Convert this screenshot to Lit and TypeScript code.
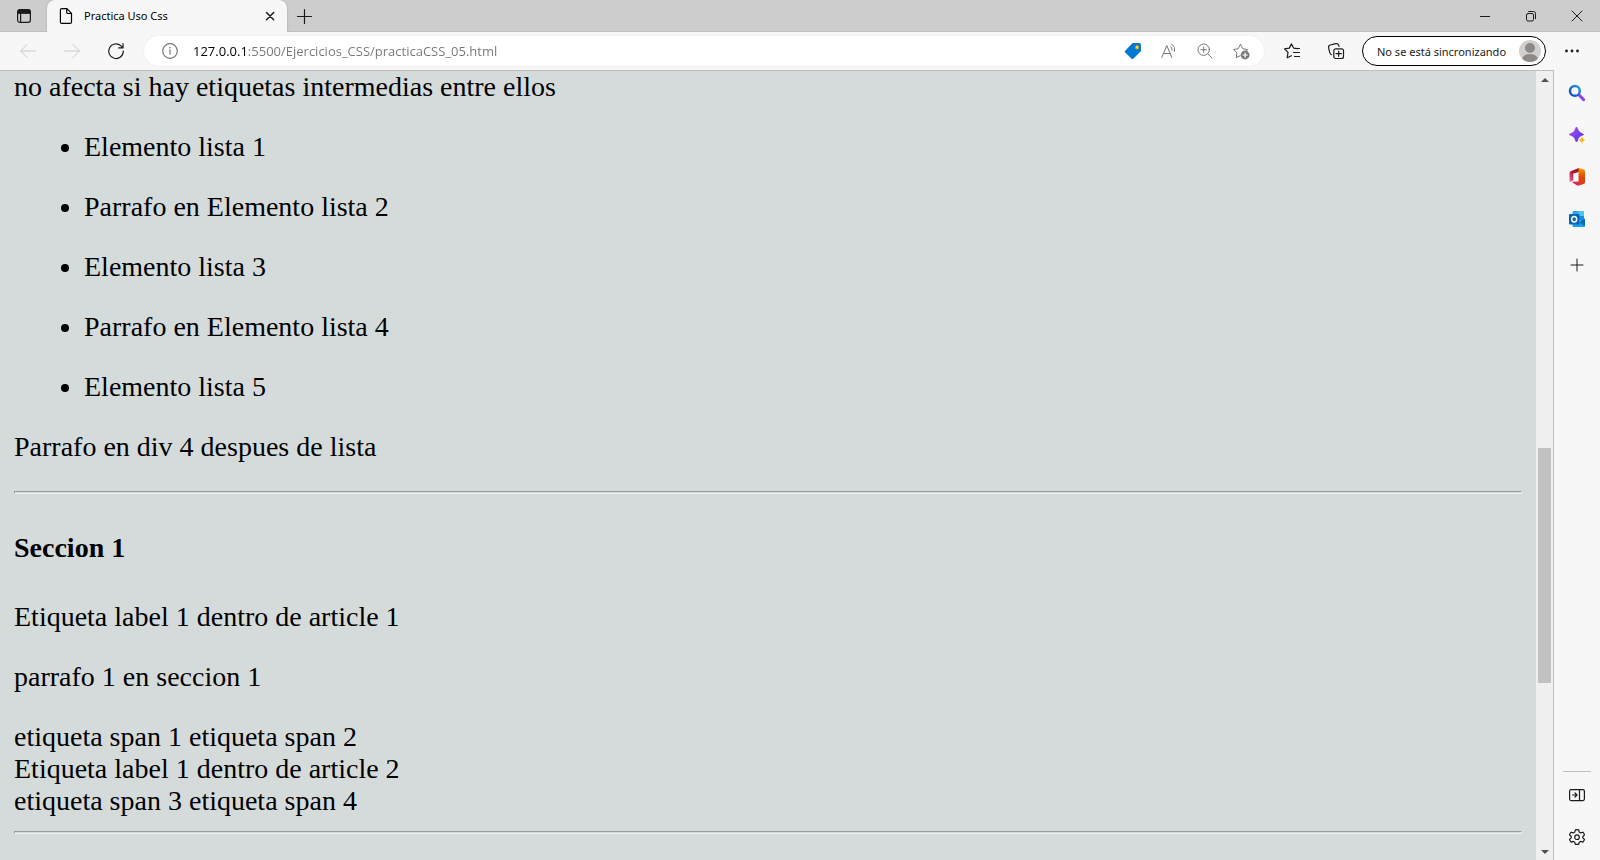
import { LitElement, html, css, svg } from "lit";
import { customElement } from "lit/decorators.js";

const svgIcon = (body: unknown, size = 16) =>
  html`<svg width=${size} height=${size} viewBox="0 0 ${size} ${size}" fill="none" stroke="currentColor" stroke-linecap="round" stroke-linejoin="round" aria-hidden="true">${body}</svg>`;

const icons = {
  tabs: svgIcon(svg`<rect x="1.6" y="1.6" width="12.8" height="12.8" rx="2.4" stroke-width="1.2"/><path d="M1.6 5V4a2.4 2.4 0 0 1 2.4-2.4h8A2.4 2.4 0 0 1 14.4 4v1z" fill="currentColor"/><path d="M4.6 5v9" stroke-width="1.2"/>`),
  page: svgIcon(svg`<path d="M3.9.6h5l4.6 4.7v8.6a1.5 1.5 0 0 1-1.5 1.5H3.9A1.5 1.5 0 0 1 2.4 13.9V2.1A1.5 1.5 0 0 1 3.9.6zM8.7.8v3.4a1.3 1.3 0 0 0 1.3 1.3h3.3" stroke-width="1.2"/>`),
  tabClose: svgIcon(svg`<path d="M4.5 4.5l7.2 7.2M11.7 4.5l-7.2 7.2" stroke-width="1.5"/>`),
  plus: svgIcon(svg`<path d="M8.500 1.500v14M1.500 8.500h14" stroke-width="1.2"/>`, 17),
  minimize: svgIcon(svg`<path d="M3 8.500h10" stroke-linecap="butt"/>`),
  restore: svgIcon(svg`<rect x="3.5" y="5.5" width="7" height="7.5" rx="1.5"/><path d="M5.6 3.5h4.9a2 2 0 0 1 2 2v5.2"/>`),
  close: svgIcon(svg`<path d="M3 3l10 10M13 3L3 13"/>`),
  back: svgIcon(svg`<path d="M15.5 8H.8M7 1.5L.6 8 7 14.5"/>`),
  forward: svgIcon(svg`<path d="M.5 8h14.700M9 1.5L15.4 8 9 14.5"/>`),
  reload: svgIcon(svg`<path d="M15.3 8.2A7.3 7.3 0 1 1 13 2.9l1.8 1.7M15 .7v4.2h-4.3" stroke-width="1.2"/>`),
  info: svgIcon(svg`<circle cx="8" cy="8" r="7.3" stroke-width="1.2"/><path d="M8 7.2v4" stroke-width="1.2"/><circle cx="8" cy="4.800" r=".8" fill="currentColor" stroke="none"/>`),
  tag: svgIcon(svg`<path d="M7.6 0h6.5A1.900 1.900 0 0 1 16 1.900v6L8.500 15.500a1.500 1.500 0 0 1-2.100 0L.4 9.800a1.500 1.500 0 0 1 0-2.300z" fill="#0078d4" stroke="none"/><rect x="10.5" y="2.700" width="3.2" height="3.2" rx="1" fill="#ffd65c" stroke="#c69a1d"/>`),
  read: svgIcon(svg`<path d="M.8 14.5L5.800 2.500l5 12M2.600 10.500h6.400M9.800 3.600q1.400 1.400 1.200 3.600M11 1.300q3.600 2.600 2.600 7"/>`),
  zoom: svgIcon(svg`<circle cx="6.7" cy="6.7" r="5.7"/><path d="M10.900 10.900l4 4M6.700 4v5.400M4 6.700h5.400"/>`),
  star: svgIcon(svg`<path d="M7.100 12.700l-3.900 2 .7-4.800L.600 6.500l4.600-.8L7.500 1.200l2.200 4.500 5 .8-1.500 1.700"/><circle cx="12.1" cy="12" r="4.400" fill="currentColor" stroke="none"/><path d="M12.100 9.800v4.400M9.900 12h4.400" stroke="#fff" stroke-width="1.200"/>`, 17),
  favorites: svgIcon(svg`<path d="M13.500 5.600l-3.900-.5L7.500.9 5.300 5.100.6 5.900 4 9.300l-.8 5.500 4.200-2.100M10.500 5.500h5M9.500 9.500h6M10.500 13.500h5" stroke-width="1.2"/>`),
  collections: svgIcon(svg`<rect x="5.800" y="5.800" width="9.700" height="9.700" rx="2" stroke-width="1.2"/><path d="M10.650 8v5.300M8 10.650h5.300" stroke-width="1.2"/><path d="M3.500 11.700C2.300 11.300 2 10.500 1.700 9.400L.6 4.800C.3 3.300.9 2.400 2.200 2L7.800.6c1.500-.3 2.400.2 2.900 1.500l.3 1.300" stroke-width="1.2"/>`),
  avatar: svgIcon(svg`<defs><clipPath id="face"><circle cx="11" cy="11" r="11"/></clipPath></defs><circle cx="11" cy="11" r="11" fill="#d2d0ce" stroke="none"/><g clip-path="url(#face)" fill="#8f8985" stroke="none"><circle cx="11" cy="8" r="5"/><ellipse cx="11" cy="19" rx="7.8" ry="5"/></g>`, 22),
  dots: svgIcon(svg`<g fill="currentColor" stroke="none"><circle cx="2.5" cy="8" r="1.4"/><circle cx="8" cy="8" r="1.4"/><circle cx="13.5" cy="8" r="1.4"/></g>`),
  search: svgIcon(svg`<defs><linearGradient id="lens" x1="1" y1="0" x2="0" y2="1"><stop stop-color="#2f9be8"/><stop offset="1" stop-color="#0c46bd"/></linearGradient></defs><path d="M10.300 10.300l4.300 4.300" stroke="#8a45ee" stroke-width="3"/><circle cx="5.900" cy="5.900" r="4.900" stroke="url(#lens)" stroke-width="2.500"/>`),
  discover: svgIcon(svg`<defs><linearGradient id="spark" x1="0" y1="0" x2="1" y2="1"><stop stop-color="#b04df0"/><stop offset="1" stop-color="#4b35df"/></linearGradient></defs><path d="M7.500 0q.9 0 1.200 1.300 1 4 5 5.100 1.300.4 1.300 1.100t-1.300 1.100q-4 1.100-5 5.100Q8.400 15 7.500 15t-1.200-1.300q-1-4-5-5.100Q0 8.200 0 7.500t1.300-1.100q4-1.100 5-5.100Q6.600 0 7.500 0z" fill="url(#spark)" stroke="none"/><path d="M13 9.200q.7 3.100 3.900 3.800-3.200.7-3.900 3.900-.7-3.200-3.900-3.900 3.200-.7 3.900-3.800z" fill="#ffb50b" stroke="#f7f7f7" stroke-width=".4"/>`),
  office: svgIcon(svg`<defs><linearGradient id="officeLeft" x1="0" y1="1" x2="1" y2="0"><stop stop-color="#f0709a"/><stop offset=".5" stop-color="#b5173f"/><stop offset="1" stop-color="#8b1620"/></linearGradient><linearGradient id="officeRight" x1="0" y1="0" x2="0" y2="1"><stop stop-color="#f5a000"/><stop offset=".5" stop-color="#e0480b"/><stop offset="1" stop-color="#d93b16"/></linearGradient></defs><g transform="translate(0 -1.500)" stroke="none"><path d="M10 .5L1.500 3.800Q.5 4.200.5 5.300v8q0 1.200 1 .9l2.800-1.500V5.900L10 4.500z" fill="url(#officeLeft)"/><path d="M9.500.3l5.200 1.600q1.300.4 1.300 1.800v11q0 1.300-1.300 1.700L9.500 18v-4z" fill="url(#officeRight)"/><path d="M10 14l-6 .3q-1 .2-.3.9l4.100 2.600q1.200.6 2.200.2z" fill="#d9304f"/></g>`),
  outlook: svgIcon(svg`<g stroke="none"><rect x="3.500" y="0" width="11.500" height="10" rx="1" fill="#28a8ea"/><rect x="9.500" y="0" width="5.500" height="5" fill="#4cc4f5"/><rect x="9.500" y="5" width="5.500" height="4" fill="#1490df"/><path d="M3.500 7.500l6.500 3.800 6-3.800V15q0 1-1 1H4.500q-1 0-1-1z" fill="#1aa0e6"/><path d="M16 7.500L10 11.300l6 4z" fill="#0f6cbd"/><rect x="0" y="3" width="10.500" height="10.500" rx="1" fill="#0364b8"/></g><ellipse cx="5.200" cy="8.200" rx="2.500" ry="2.800" stroke="#fff" stroke-width="1.500"/>`),
  add: svgIcon(svg`<path d="M8 2v12M2 8h12"/>`),
  hide: svgIcon(svg`<rect x=".6" y="2.600" width="14.800" height="11" rx="1.500" stroke-width="1.2"/><path d="M10.500 3v10.500M3.500 8h4.300M6 6l2 2-2 2" stroke-width="1.2"/>`),
  settings: svgIcon(svg`<path d="M8 .6q1 0 1.700.2l.5 2.300 1.400.8 2.300-.7q1.200 1.300 1.600 2.700L13.800 7.500v1.400l1.700 1.500q-.5 1.500-1.600 2.700l-2.300-.7-1.400.8-.5 2.100q-1.700.3-3.400 0l-.5-2.100-1.400-.8-2.300.7Q.9 11.800.5 10.400l1.700-1.500V7.500L.5 5.900Q.9 4.500 2.100 3.200l2.300.7 1.400-.8.5-2.300Q7 .6 8 .6z" stroke-width="1.2"/><circle cx="8" cy="8.200" r="2.300" stroke-width="1.2"/>`),
  up: html`<svg width="8" height="4" viewBox="0 0 8 4" aria-hidden="true"><path d="M4 0l4 4H0z" fill="#505050"/></svg>`,
  down: html`<svg width="8" height="4" viewBox="0 0 8 4" aria-hidden="true"><path d="M0 0h8L4 4z" fill="#505050"/></svg>`,
};

const button = (label: string, icon: unknown, kind = "") =>
  html`<button class="btn ${kind}" type="button" aria-label=${label}>${icon}</button>`;

@customElement("app-root")
export class AppRoot extends LitElement {
  static styles = css`
    :host {
      display: flex;
      flex-direction: column;
      height: 100vh;
      background: #f7f7f7;
      color: #000;
      font-family: "Segoe UI", "Noto Sans", sans-serif;
      overflow: hidden;
    }
    * { box-sizing: border-box; }
    svg { display: block; flex: none; overflow: visible; }
    .btn {
      display: flex;
      align-items: center;
      justify-content: center;
      flex: none;
      padding: 0;
      border: 0;
      background: none;
      color: #1b1b1b;
      font: inherit;
    }
    .strip {
      display: flex;
      flex: none;
      height: 32px;
      background: #cdcdcd;
      box-shadow: inset 0 -1px #bfbfbf;
    }
    .strip .btn { height: 32px; }
    .menu { width: 47px; }
    .tab {
      position: relative;
      display: flex;
      align-items: center;
      width: 240px;
      padding: 0 8px 0 11px;
      border-radius: 8px 8px 0 0;
      background: #f7f7f7;
      box-shadow: 0 0 2px #00000040;
      clip-path: inset(0 -3px 0 -3px);
      font-size: 11px;
      line-height: 16px;
    }
    .title { flex: 1; padding-left: 10px; }
    .tab .close { width: 18px; }
    .new { width: 35px; }
    .window { display: flex; margin-left: auto; }
    .window .btn { width: 46px; }
    .toolbar {
      display: flex;
      align-items: center;
      flex: none;
      height: 38px;
      padding: 0 6px;
    }
    .toolbar .btn { width: 44px; height: 30px; }
    .toolbar .dim { color: #c9c9c9; }
    .address {
      display: flex;
      align-items: center;
      flex: 1;
      height: 30px;
      margin: 0 6px;
      padding: 0 5px 0 8px;
      border-radius: 15px;
      background: #fff;
      box-shadow: 0 0 3px #0000000d;
    }
    .address .btn { width: 36px; color: #767676; }
    .url {
      flex: 1;
      min-width: 0;
      height: 20px;
      padding: 0 0 0 5px;
      border: 0;
      outline: 0;
      background: linear-gradient(90deg, #000 58px, #767676 58px);
      background-clip: text;
      -webkit-background-clip: text;
      color: transparent;
      font-family: "Segoe UI", "Open Sans", sans-serif;
      font-size: 13px;
      line-height: 20px;
    }
    .toolbar .profile {
      width: 184px;
      margin: 0 4px;
      padding: 0 4px 0 14px;
      justify-content: space-between;
      border: 1px solid #000;
      border-radius: 15px;
      background: #fff;
      color: #1b1b1b;
      font-size: 11px;
    }
    .body { display: flex; flex: 1; min-height: 0; }
    .view {
      display: flex;
      flex: 1;
      min-width: 0;
      border: solid #bdbdbd;
      border-width: 1px 1px 0 0;
    }
    .page {
      flex: 1;
      min-width: 0;
      padding: 0 14px;
      overflow: hidden;
      background: #d5dbdb;
      font-family: "Liberation Serif", "Times New Roman", serif;
      font-size: 28px;
      line-height: 32px;
    }
    .page p { margin: 0 0 28px; }
    .list { margin: 0 0 28px; padding-left: 70px; }
    .page h4 { margin: 38px 0 37px; font-size: 28px; }
    .rule {
      height: 3px;
      margin: 14px 0;
      border: 1px solid;
      border-color: #979b9b #eef0f0 #eef0f0 #979b9b;
    }
    .scroll {
      display: flex;
      flex-direction: column;
      width: 17px;
      flex: none;
      background: #f0f0f0;
    }
    .scroll .btn { height: 17px; }
    .track { display: flex; flex-direction: column; flex: 1; padding: 0 2px; }
    .before { flex: 360; }
    .thumb { flex: 235; background: #c1c1c1; }
    .after { flex: 160; }
    .side {
      display: flex;
      flex-direction: column;
      width: 46px;
      flex: none;
      padding: 2px 0;
    }
    .side .btn { height: 42px; }
    .side .add { margin-top: 4px; }
    .line { height: 1px; margin: auto 9px 2px; background: #bdbdbd; }
  `;

  render() {
    return html`
      <header class="strip">
        ${button("Menú de pestañas", icons.tabs, "menu")}
        <div class="tab">
          ${icons.page}
          <span class="title">Practica Uso Css</span>
          ${button("Cerrar pestaña", icons.tabClose, "close")}
        </div>
        ${button("Nueva pestaña", icons.plus, "new")}
        <div class="window">
          ${button("Minimizar", icons.minimize)}
          ${button("Restaurar", icons.restore)}
          ${button("Cerrar", icons.close)}
        </div>
      </header>
      <nav class="toolbar">
        ${button("Atrás", icons.back, "dim")}
        ${button("Adelante", icons.forward, "dim")}
        ${button("Actualizar", icons.reload)}
        <div class="address">
          ${button("Información del sitio", icons.info)}
          <input class="url" type="text" aria-label="Dirección" spellcheck="false" value="127.0.0.1:5500/Ejercicios_CSS/practicaCSS_05.html" />
          ${button("Compras", icons.tag)}
          ${button("Leer en voz alta", icons.read)}
          ${button("Zoom", icons.zoom)}
          ${button("Agregar a favoritos", icons.star)}
        </div>
        ${button("Favoritos", icons.favorites)}
        ${button("Colecciones", icons.collections)}
        <button class="btn profile" type="button"><span>No se está sincronizando</span>${icons.avatar}</button>
        ${button("Configuración y más", icons.dots)}
      </nav>
      <div class="body">
        <div class="view">
          <main class="page">
            <p>no afecta si hay etiquetas intermedias entre ellos</p>
            <ul class="list">
              <li><p>Elemento lista 1</p></li>
              <li><p>Parrafo en Elemento lista 2</p></li>
              <li><p>Elemento lista 3</p></li>
              <li><p>Parrafo en Elemento lista 4</p></li>
              <li><p>Elemento lista 5</p></li>
            </ul>
            <p>Parrafo en div 4 despues de lista</p>
            <hr class="rule" />
            <section>
              <h4>Seccion 1</h4>
              <article>
                <span>Etiqueta label 1 dentro de article 1</span>
                <p></p>
                <p>parrafo 1 en seccion 1</p>
                <span>etiqueta span 1</span>
                <span>etiqueta span 2</span>
              </article>
              <article>
                <span>Etiqueta label 1 dentro de article 2</span>
              </article>
              <span>etiqueta span 3</span>
              <span>etiqueta span 4</span>
            </section>
            <hr class="rule" />
          </main>
          <div class="scroll">
            ${button("Subir", icons.up)}
            <div class="track">
              <div class="before"></div>
              <div class="thumb"></div>
              <div class="after"></div>
            </div>
            ${button("Bajar", icons.down)}
          </div>
        </div>
        <aside class="side">
          ${button("Buscar", icons.search)}
          ${button("Descubrir", icons.discover)}
          ${button("Office", icons.office)}
          ${button("Outlook", icons.outlook)}
          ${button("Agregar", icons.add, "add")}
          <div class="line"></div>
          ${button("Ocultar barra lateral", icons.hide)}
          ${button("Configuración", icons.settings)}
        </aside>
      </div>
    `;
  }
}
